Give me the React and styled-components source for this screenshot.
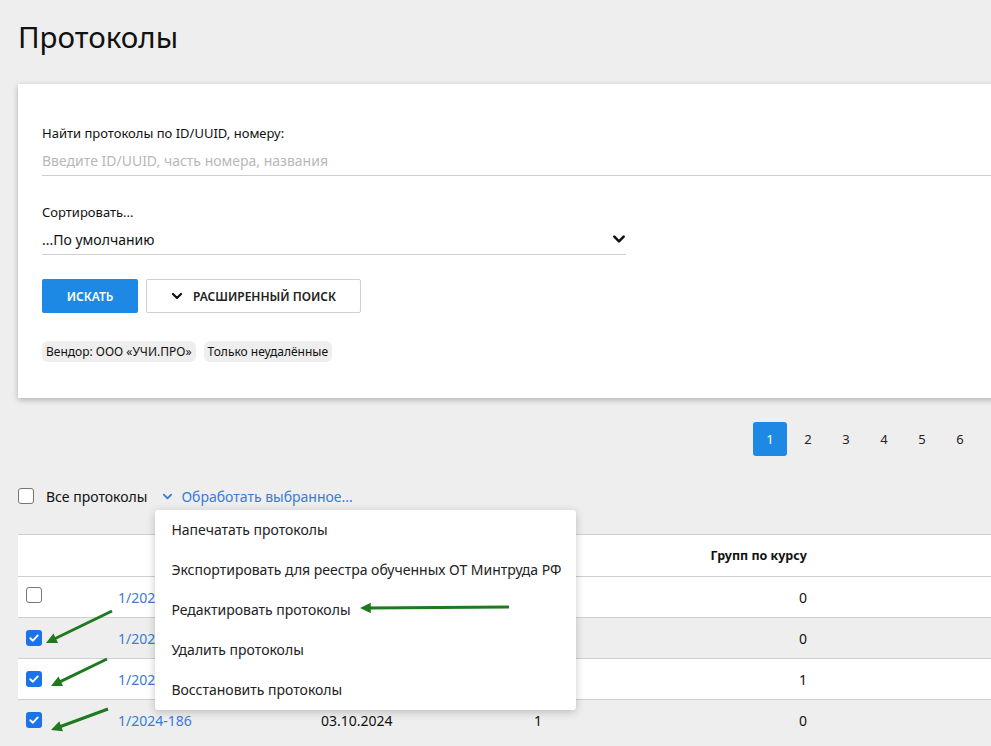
import React from 'react'
import styled, { createGlobalStyle } from 'styled-components'

const Global = createGlobalStyle`
  html, body {
    margin: 0;
    padding: 0;
    background: #eeeeee;
    overflow: hidden;
  }
  body {
    font-family: "Noto Sans", "Open Sans", sans-serif;
    color: #222;
  }
`;

const Page = styled.div`
    width: 1140px;
    padding: 0 0 40px 18px;
    `;

const Title = styled.h1`
    margin: 0;
    padding-top: 17px;
    height: 84px;
    box-sizing: border-box;
    font-size: 29.5px;
    font-weight: 400;
    color: #111;
    line-height: 40px;
`;

const Card = styled.div`
    background: #fff;
    box-shadow: 0 2px 6px rgba(0,0,0,0.25);
    padding: 40px 24px 36px;
    `;

const Label = styled.div`
    font-size: 13px;
    line-height: 18px;
    color: #111;
`;

const Field = styled.div`
    display: flex;
    align-items: center;
    justify-content: space-between;
    height: 30px;
    border-bottom: 1px solid #cfcfcf;
    margin-top: 3px;
    font-size: 14px;
    color: ${p => p.$placeholder ? '#b8b8b8' : '#111'};
    width: ${p => p.$width || 'auto'};
`;

const Gap = styled.div`
    height: ${p => p.$h}px;
`;

const Buttons = styled.div`
    display: flex;
    gap: 8px;
    margin-top: 24px;
`;

const Button = styled.button`
    height: 34px;
    box-sizing: border-box;
    display: flex;
    align-items: center;
    justify-content: center;
    gap: 10px;
    font-family: inherit;
    font-size: 12px;
    font-weight: 600;
    text-transform: uppercase;
    border-radius: 2px;
    cursor: pointer;
    width: ${p => p.$width}px;
    background: ${p => p.$primary ? '#1e88e5' : '#fff'};
    color: ${p => p.$primary ? '#fff' : '#222'};
    border: ${p => p.$primary ? 'none' : '1px solid #cfcfcf'};
`;

const Chips = styled.div`
    display: flex;
    gap: 8px;
    margin-top: 28px;
`;

const Chip = styled.span`
    background: #eeeeee;
    border-radius: 6px;
    font-size: 12px;
    line-height: 21px;
    padding: 0 4px;
    color: #111;
`;

const Pager = styled.div`
    display: flex;
    justify-content: flex-end;
    gap: 4px;
    width: 959px;
    margin-top: 24px;
`;

const PageBtn = styled.div`
    width: 34px;
    height: 34px;
    display: flex;
    align-items: center;
    justify-content: center;
    font-size: 13px;
    border-radius: 3px;
    background: ${p => p.$active ? '#1e88e5' : 'transparent'};
    color: ${p => p.$active ? '#fff' : '#222'};
`;

const Toolbar = styled.div`
    display: flex;
    align-items: center;
    height: 24px;
    margin-top: 28px;
    font-size: 14px;
`;

const Box = styled.span`
    width: 16px;
    height: 16px;
    box-sizing: border-box;
    border-radius: 3px;
    display: inline-flex;
    align-items: center;
    justify-content: center;
    flex-shrink: 0;
    background: ${p => p.$checked ? '#1a73e8' : '#fff'};
    border: ${p => p.$checked ? 'none' : '1px solid #767676'};
`;

const ToolText = styled.span`
    margin-left: 12px;
    color: #111;
`;

const Actions = styled.div`
    position: relative;
    margin-left: 15px;
`;

const ActionLink = styled.span`
    display: flex;
    align-items: center;
    gap: 8px;
    color: #3a7bd5;
`;

const Menu = styled.div`
    position: absolute;
    left: -7px;
    top: 23px;
    width: 421px;
    background: #fff;
    border-radius: 3px;
    box-shadow: 0 2px 8px rgba(0,0,0,0.22);
    z-index: 5;
`;

const MenuItem = styled.div`
    height: 40px;
    display: flex;
    align-items: center;
    padding-left: 16px;
    font-size: 14px;
    color: #222;
    white-space: nowrap;
`;

const TableWrap = styled.div`
    position: relative;
    margin-top: 26px;
`;

const Row = styled.div`
    display: grid;
    grid-template-columns: 92px 203px 157px 80px 265px 1fr;
    align-items: center;
    height: ${p => p.$head ? 41 : 40}px;
    border-top: 1px solid #cfcfcf;
    background: ${p => p.$shade ? '#eeeeee' : '#fff'};
    font-size: 14px;
    &:last-child { border-bottom: 1px solid #cfcfcf; }
`;

const Cell = styled.div`
    padding: 0 8px;
    text-align: ${p => p.$right ? 'right' : 'left'};
    font-weight: ${p => p.$bold ? 700 : 400};
    font-size: ${p => p.$bold ? '12.5px' : 'inherit'};
    color: ${p => p.$link ? '#3a7bd5' : '#111'};
    white-space: nowrap;
    overflow: hidden;
`;

const Overlay = styled.svg`
    position: absolute;
    left: -18px;
    top: -535px;
    pointer-events: none;
    z-index: 10;
`;

const Chevron = ({ size = 12, color = '#111', w = 2.2 }) => (
    <svg width={size} height={size} viewBox="0 0 12 12">
        <path d="M2 4 L6 8 L10 4" fill="none" stroke={color} strokeWidth={w} strokeLinecap="round" strokeLinejoin="round" />
    </svg>
);

const Check = ({ checked }) => (
    <Box $checked={checked}>
        {checked && (
            <svg width="12" height="12" viewBox="0 0 12 12">
                <path d="M2.3 6.2 L4.9 8.7 L9.8 3.4" fill="none" stroke="#fff" strokeWidth="1.9" strokeLinecap="round" strokeLinejoin="round" />
            </svg>
        )}
    </Box>
);

const rows = [
    { id: '1/2024-189', date: '', n: '', g: '0', checked: false },
    { id: '1/2024-188', date: '', n: '', g: '0', checked: true },
    { id: '1/2024-187', date: '', n: '', g: '1', checked: true },
    { id: '1/2024-186', date: '03.10.2024', n: '1', g: '0', checked: true },
];

const menu = [
    'Напечатать протоколы',
    'Экспортировать для реестра обученных ОТ Минтруда РФ',
    'Редактировать протоколы',
    'Удалить протоколы',
    'Восстановить протоколы',
];

const Arrow = ({ x1, y1, x2, y2 }) => {
    const a = Math.atan2(y2 - y1, x2 - x1);
    const L = 12, s = 0.45;
    const p1 = [x2 - L * Math.cos(a - s), y2 - L * Math.sin(a - s)];
    const p2 = [x2 - L * Math.cos(a + s), y2 - L * Math.sin(a + s)];
    const bx = x2 - 8 * Math.cos(a), by = y2 - 8 * Math.sin(a);
    return (
        <g>
            <line x1={x1} y1={y1} x2={bx} y2={by} stroke="#1f7a1f" strokeWidth="3" />
            <polygon points={`${x2},${y2} ${p1[0]},${p1[1]} ${p2[0]},${p2[1]}`} fill="#1f7a1f" />
        </g>
    );
};

const App = () => {
    return (
        <Page>
            <Global />
            <Title>Протоколы</Title>
            <Card>
                <Label>Найти протоколы по ID/UUID, номеру:</Label>
                <Field $placeholder>Введите ID/UUID, часть номера, названия</Field>
                <Gap $h={27} />
                <Label>Сортировать...</Label>
                <Field $width="584px">
                    <span>...По умолчанию</span>
                    <Chevron size={14} />
                </Field>
                <Buttons>
                    <Button $primary $width={96}>Искать</Button>
                    <Button $width={215}><Chevron size={12} />Расширенный поиск</Button>
                </Buttons>
                <Chips>
                    <Chip>Вендор: ООО «УЧИ.ПРО»</Chip>
                    <Chip>Только неудалённые</Chip>
                </Chips>
            </Card>

            <Pager>
                {[1, 2, 3, 4, 5, 6].map(n => (
                    <PageBtn key={n} $active={n === 1}>{n}</PageBtn>
                ))}
            </Pager>

            <Toolbar>
                <Check />
                <ToolText>Все протоколы</ToolText>
                <Actions>
                    <ActionLink><Chevron size={11} color="#3a7bd5" w={2} />Обработать выбранное...</ActionLink>
                    <Menu>
                        {menu.map(m => <MenuItem key={m}>{m}</MenuItem>)}
                    </Menu>
                </Actions>
            </Toolbar>

            <TableWrap>
                <Row $head>
                    <Cell />
                    <Cell />
                    <Cell />
                    <Cell />
                    <Cell $right $bold>Групп по курсу</Cell>
                    <Cell />
                </Row>
                {rows.map((r, i) => (
                    <Row key={r.id} $shade={i % 2 === 1}>
                        <Cell><Check checked={r.checked} /></Cell>
                        <Cell $link>{r.id}</Cell>
                        <Cell>{r.date}</Cell>
                        <Cell $right>{r.n}</Cell>
                        <Cell $right>{r.g}</Cell>
                        <Cell />
                    </Row>
                ))}
                <Overlay width="991" height="746">
                    <Arrow x1={509} y1={608} x2={360} y2={609} />
                    <Arrow x1={112} y1={612} x2={46} y2={644} />
                    <Arrow x1={107} y1={660} x2={51} y2={687} />
                    <Arrow x1={108} y1={710} x2={51} y2={731} />
                </Overlay>
            </TableWrap>
        </Page>
    )
}

export default App
